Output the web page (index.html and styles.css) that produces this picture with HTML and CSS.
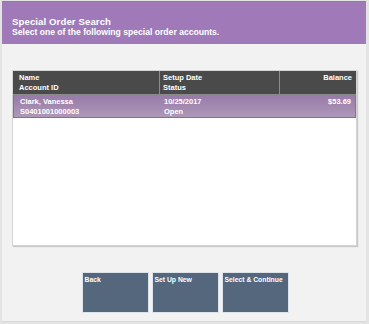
FILE: index.html
```html
<!DOCTYPE html>
<html lang="en">
<head>
  <meta charset="UTF-8" />
  <title>Special Order Search</title>
  <link rel="stylesheet" href="styles.css">
</head>
<body>
  <div class="window">
    <div class="header">
      <h1 class="title">Special Order Search</h1>
      <p class="subtitle">Select one of the following special order accounts.</p>
    </div>

    <div class="content">
      <div class="list">
        <div class="list-head">
          <div class="col col-name">Name<br>Account ID</div>
          <div class="col col-date">Setup Date<br>Status</div>
          <div class="col col-balance">Balance</div>
        </div>
        <div class="row selected">
          <div class="col col-name">Clark, Vanessa<br>S0401001000003</div>
          <div class="col col-date">10/25/2017<br>Open</div>
          <div class="col col-balance">$53.69</div>
        </div>
      </div>

      <div class="buttons">
        <div class="btn">Back</div>
        <div class="btn">Set Up New</div>
        <div class="btn">Select &amp; Continue</div>
      </div>
    </div>
  </div>
</body>
</html>
```

FILE: styles.css
```css
* {
  margin: 0;
  padding: 0;
  box-sizing: border-box;
}

html, body {
  width: 369px;
  height: 324px;
  background: #e4e4e4;
  font-family: "Liberation Sans", Arial, sans-serif;
  overflow: hidden;
}

.window {
  margin: 1px 3px 0 2px;
  height: 321px;
  background: #f2f2f2;
  border-bottom: 1px solid #d8d8d8;
  display: flex;
  flex-direction: column;
}

.header {
  background: #a07ab8;
  color: #fff;
  height: 43px;
  padding: 14px 10px 0;
  border-top: 1px solid #9a74b2;
}

.title {
  font-size: 9.6px;
  font-weight: bold;
  line-height: 11px;
  letter-spacing: 0.1px;
}

.subtitle {
  font-size: 8.6px;
  font-weight: bold;
  line-height: 10px;
}

.content {
  flex: 1;
  padding: 26px 9px 0 10px;
  display: flex;
  flex-direction: column;
}

.list {
  height: 176px;
  background: #fff;
  border: 1px solid #d4d4d4;
  box-shadow: 1px 1px 1px #c8c8c8;
}

.list-head {
  display: flex;
  height: 24px;
  background: #4a4a4a;
  border-bottom: 1px solid #8a8a8a;
  color: #fff;
}

.col {
  font-size: 7.5px;
  font-weight: bold;
  line-height: 10px;
  padding: 2px 6px 0;
}

.col-name {
  width: 146px;
}

.col-date {
  width: 120px;
  padding-left: 3px;
}

.col-balance {
  flex: 1;
  text-align: right;
  padding-right: 4px;
}

.list-head .col + .col {
  border-left: 1px solid #8c8c8c;
}

.row {
  display: flex;
  height: 23px;
  color: #fff;
}

.row .col {
  padding-top: 2px;
}

.row .col-date {
  padding-left: 4px;
}

.selected {
  background: linear-gradient(#977aa8, #ae98b8);
  border: 1px solid #7a7a7a;
  border-top: none;
}

.buttons {
  display: flex;
  justify-content: center;
  gap: 3px;
  margin-top: 26px;
  padding-left: 1px;
}

.btn {
  width: 67px;
  height: 41px;
  background: #55677d;
  border: 1px solid #dde3ea;
  color: #fff;
  font-size: 6.8px;
  font-weight: bold;
  white-space: nowrap;
  padding: 3px 2px;
}
```
